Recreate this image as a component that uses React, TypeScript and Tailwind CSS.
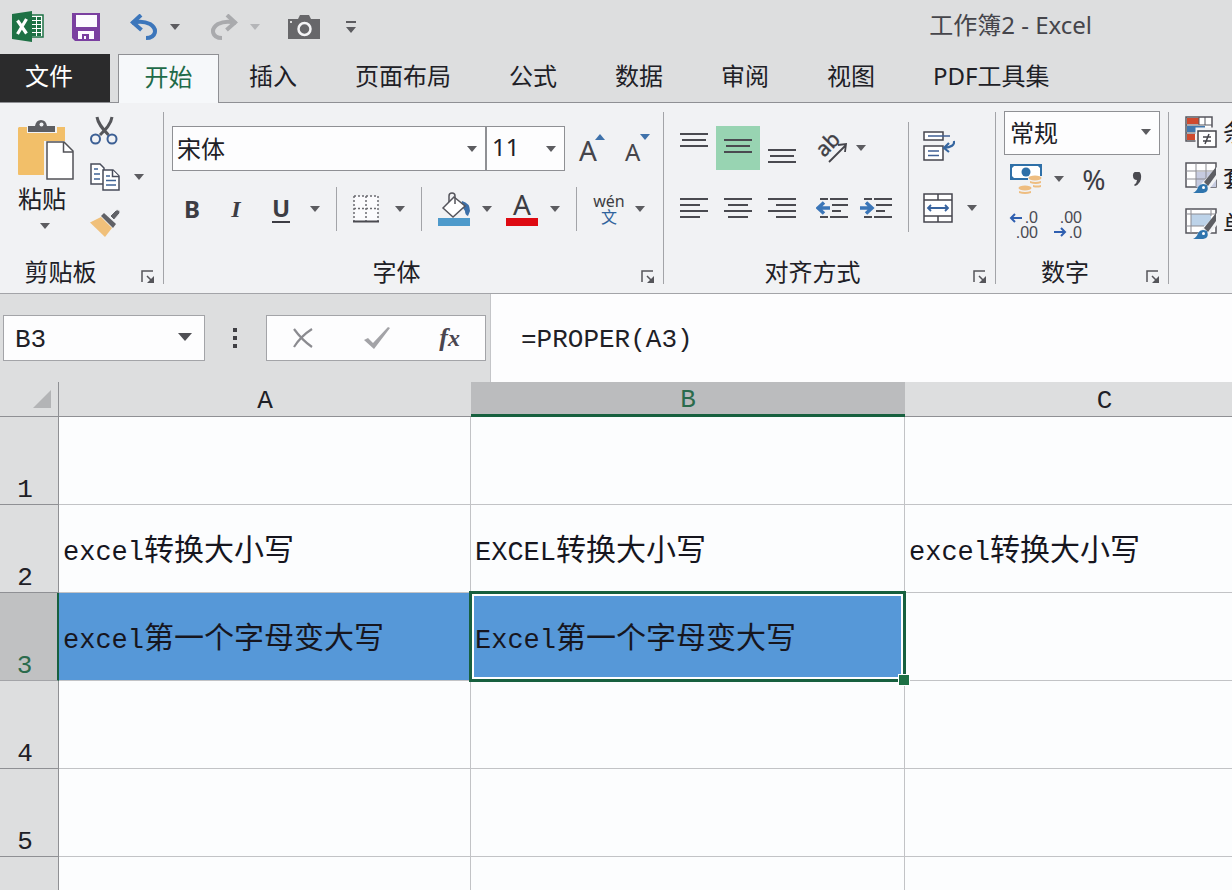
import type { ReactNode } from "react";

const COLUMNS = ["A", "B", "C"];

type Cell = { latin: string; han: string } | null;

const ROWS: { id: number; cells: Cell[]; filled?: boolean }[] = [
  { id: 1, cells: [null, null, null] },
  {
    id: 2,
    cells: [
      { latin: "excel", han: "转换大小写" },
      { latin: "EXCEL", han: "转换大小写" },
      { latin: "excel", han: "转换大小写" },
    ],
  },
  {
    id: 3,
    filled: true,
    cells: [{ latin: "excel", han: "第一个字母变大写" }, { latin: "Excel", han: "第一个字母变大写" }, null],
  },
  { id: 4, cells: [null, null, null] },
  { id: 5, cells: [null, null, null] },
];

const TABS = ["插入", "页面布局", "公式", "数据", "审阅", "视图", "PDF工具集"];

const Caret = ({ className = "text-[#5c5c60]" }: { className?: string }) => (
  <svg viewBox="0 0 10 6" className={`h-[6px] w-[10px] shrink-0 ${className}`} fill="currentColor" aria-hidden="true">
    <path d="M0 0h10L5 6z" />
  </svg>
);

const CaretButton = ({ label, className = "" }: { label: string; className?: string }) => (
  <button type="button" aria-label={label} className={`flex h-6 w-[10px] shrink-0 items-center ${className}`}>
    <Caret />
  </button>
);

const IconButton = ({ label, className = "", children }: { label: string; className?: string; children: ReactNode }) => (
  <button type="button" aria-label={label} title={label} className={`flex shrink-0 items-center justify-center ${className}`}>
    {children}
  </button>
);

const Separator = ({ className = "" }: { className?: string }) => (
  <div className={`w-px shrink-0 bg-[#a3a4a8] ${className}`} />
);

const Group = ({
  title,
  className = "",
  titleClassName = "",
  children,
}: {
  title: string;
  className?: string;
  titleClassName?: string;
  children: ReactNode;
}) => (
  <section className={`flex shrink-0 flex-col justify-between border-r border-[#a3a4a8] ${className}`}>
    {children}
    <div className="flex h-6 items-center">
      <span className={`flex-1 text-center ${titleClassName}`}>{title}</span>
      <button type="button" aria-label={`${title}设置`} className="flex h-full w-[34px] items-end justify-end pr-2">
        <svg viewBox="0 0 14 14" className="h-[14px] w-[14px]" fill="none" stroke="#55555a" strokeWidth="1.5">
          <path d="M1 12V1h11M6 6l6 6" />
          <path d="M13 6v7H6z" fill="#55555a" stroke="none" />
        </svg>
      </button>
    </div>
  </section>
);

const Lines = ({ rows }: { rows: [number, number][] }) => (
  <svg
    width="28"
    height={rows.length * 6 - 4}
    viewBox={`0 0 28 ${rows.length * 6 - 4}`}
    stroke="#4a4a50"
    strokeWidth="2"
    aria-hidden="true"
  >
    {rows.map(([from, to], i) => (
      <path key={i} d={`M${from} ${i * 6 + 1}H${to}`} />
    ))}
  </svg>
);

const ExcelLogo = () => (
  <svg width="32" height="32" viewBox="0 0 32 32" aria-hidden="true">
    <path d="M18 4h13v22H18z" fill="#fff" stroke="#1e7145" strokeWidth="1.5" />
    <path
      d="M20 6h4v3h-4zM20 10h4v3h-4zM20 14h4v3h-4zM20 18h4v3h-4zM20 22h4v3h-4zM25 6h4v3h-4zM25 10h4v3h-4zM25 14h4v3h-4zM25 18h4v3h-4zM25 22h4v3h-4z"
      fill="#1e7145"
    />
    <path d="M0 3 20 0v31L0 28z" fill="#1e7145" />
    <path d="m5.500 9.500 9 13M14.500 8 5.500 23" stroke="#fff" strokeWidth="3.200" fill="none" />
  </svg>
);

const SaveIcon = () => (
  <svg width="28" height="28" viewBox="0 0 28 28" aria-hidden="true">
    <path d="M0 0h28v28H3l-3-3z" fill="#7a3fa0" />
    <path d="M4 2h21v12H4zM6 18h16v8H6z" fill="#fcfaff" />
    <path d="M10 21h7v5h-3v-3h-2v3h-2z" fill="#7a3fa0" />
  </svg>
);

const UndoIcon = () => (
  <svg width="28" height="26" viewBox="0 0 28 26" fill="none" stroke="currentColor" aria-hidden="true">
    <path d="M2 9q10-3 18 1c8 5 6 14-4 14" strokeWidth="4" />
    <path d="M11 1 3 8.500l8.500 7.500" strokeWidth="4" />
  </svg>
);

const CameraIcon = () => (
  <svg width="32" height="24" viewBox="0 0 32 24" aria-hidden="true">
    <path d="M0 4h10l2-4h9l2 4h9v20H0z" fill="#67676a" />
    <circle cx="16.500" cy="14" r="6" fill="#67676a" stroke="#f4f4f6" strokeWidth="2.500" />
    <circle cx="3" cy="7" r="1" fill="#fff" />
  </svg>
);

const PasteIcon = () => (
  <svg width="56" height="60" viewBox="0 0 56 60" aria-hidden="true">
    <path d="M1 7h8v6h30V7h8v14H26v34H1q-1 0-1-1V8z" fill="#f2bf69" />
    <path d="M10 12V6h7q1-6 6-6t6 6h8v6z" fill="#5d5e62" />
    <circle cx="23.500" cy="4.500" r="2" fill="#f1f2f4" />
    <path d="M29 22h17l9 9v28H29z" fill="#fff" stroke="#515257" strokeWidth="1.500" />
    <path d="M45.500 22v10H55" fill="none" stroke="#515257" strokeWidth="1.500" />
  </svg>
);

const CutIcon = () => (
  <svg width="28" height="30" viewBox="0 0 28 30" fill="none" aria-hidden="true">
    <path d="M7 1c1 7 6 12 11.500 18M22 1c-1 7-6 12-12 18" stroke="#55565a" strokeWidth="3" />
    <circle cx="5.500" cy="23" r="4.500" stroke="#3c5f94" strokeWidth="2" />
    <circle cx="22" cy="23" r="4.500" stroke="#3c5f94" strokeWidth="2" />
  </svg>
);

const CopyIcon = () => (
  <svg width="30" height="28" viewBox="0 0 30 28" fill="#fff" stroke="#484c5a" strokeWidth="1.500" aria-hidden="true">
    <path d="M1 1h9l4 4v16H1z" />
    <path d="M4 6h4M4 11h6M4 16h6" stroke="#3f6395" />
    <path d="M13 7h10l6 6v14H13z" />
    <path d="M22.500 7v6.500H29" />
    <path d="M16 13h4M16 17.500h10M16 22h10" stroke="#3f6395" />
  </svg>
);

const BrushIcon = () => (
  <svg width="30" height="28" viewBox="0 0 30 28" aria-hidden="true">
    <path d="M0 13.500 11 8l11 11-7 9z" fill="#f0c07a" />
    <path d="m11 7 3-3 12 11-3 4z" fill="#606166" />
    <path d="m20 7 6-6q4-1 4 3l-6 7z" fill="#606166" stroke="#f1f2f4" />
  </svg>
);

const BordersIcon = () => (
  <svg width="26" height="28" viewBox="0 0 26 28" fill="none" stroke="#6b6b70" aria-hidden="true">
    <path d="M1 1h24v25H1z" fill="#fbfbfd" stroke="none" />
    <path d="M1 1h24M1 13.500h24M1 1v25M13 1v25M25 1v25" strokeWidth="1.500" strokeDasharray="2 2" />
    <path d="M0 26.500h26" stroke="#4b4b50" strokeWidth="2" />
  </svg>
);

const FillIcon = () => (
  <svg width="32" height="34" viewBox="0 0 32 34" aria-hidden="true">
    <path d="M0 26h32v8H0z" fill="#4e9acb" />
    <path d="M24 9q8 2 8 10l-2 5q-3-1-3-5l-4-6z" fill="#3c6fa8" />
    <path d="M5 16 16 5l11 9-12 11z" fill="#fff" stroke="#55555c" strokeWidth="1.500" />
    <path d="M11 10V4q0-3 3-3t3 3v8" fill="none" stroke="#55555c" strokeWidth="1.500" />
  </svg>
);

const OrientationIcon = () => (
  <svg width="32" height="30" viewBox="0 0 32 30" className="overflow-visible" aria-hidden="true">
    <text x="8" y="25" transform="rotate(-45 8 25)" fontSize="21" fill="#3f3f45" stroke="#3f3f45" strokeWidth="0.400">
      ab
    </text>
    <path d="M13 29 30 12M22 12l8-1-1 8" fill="none" stroke="#45454b" strokeWidth="1.800" />
  </svg>
);

const IndentIcon = ({ increase = false }: { increase?: boolean }) => (
  <svg width="32" height="22" viewBox="0 0 32 22" fill="none" aria-hidden="true">
    <path d="M4 2h8M14 2h18M16 8h16M16 14h9M4 20h8M14 20h18" stroke="#4a4a50" strokeWidth="2" />
    {increase ? (
      <path d="M0 11h11M6 5.500l6 5.500-6 5.500" stroke="#3b76b8" strokeWidth="3.500" />
    ) : (
      <path d="M14 11H3M8 5.500 2 11l6 5.500" stroke="#3b76b8" strokeWidth="3.500" />
    )}
  </svg>
);

const WrapIcon = () => (
  <svg width="32" height="30" viewBox="0 0 32 30" fill="none" stroke="#45464e" strokeWidth="1.500" aria-hidden="true">
    <path d="M1 1h19v8H1zM1 15h19v14H1z" fill="#fff" />
    <path d="M5 5h22M5 20h11M5 24.500h11" stroke="#3f5f94" />
    <path d="M31 10q1 6-10 7M26 12l-5 5 5 4" stroke="#35659f" strokeWidth="2.200" />
  </svg>
);

const MergeIcon = () => (
  <svg width="30" height="30" viewBox="0 0 30 30" fill="none" stroke="#45464e" strokeWidth="1.500" aria-hidden="true">
    <path d="M1 1h28v28H1z" fill="#fff" />
    <path d="M1 7h28M1 23h28M15 1v6M15 23v6" />
    <path d="M5 15h20M8 12l-3 3 3 3M22 12l3 3-3 3" stroke="#38639e" strokeWidth="1.800" />
  </svg>
);

const CurrencyIcon = () => (
  <svg width="32" height="32" viewBox="0 0 32 32" aria-hidden="true">
    <path d="M1 2h30v14H1z" fill="#fff" stroke="#2f70a8" strokeWidth="2" />
    <path d="M0 1h6L0 7zM32 1h-6l6 6zM0 17h6l-6-6z" fill="#2f70a8" />
    <circle cx="16" cy="9" r="4.500" fill="#2f70a8" />
    <path d="M8 21h10v-8h14v16H20v3H8z" fill="#f1f2f4" />
    <g fill="#eebd80">
      <ellipse cx="25" cy="15" rx="6.500" ry="2.500" />
      <ellipse cx="15" cy="25" rx="6.500" ry="2.500" />
      <path d="M20 18q5 2 11 0v2q-5 2-11 0zM23 22q4 1 8 0v2q-4 1-8 0zM9 28q6 2 12 0v2q-6 2-12 0z" />
    </g>
  </svg>
);

const DecimalIcon = ({ increase = false }: { increase?: boolean }) => (
  <svg
    width="30"
    height="28"
    viewBox="0 0 30 28"
    className="overflow-visible font-['Liberation_Sans',sans-serif]"
    fontSize="16"
    fill="#4a4a52"
    aria-hidden="true"
  >
    <text x="29" y="12" textAnchor="end">
      {increase ? ".0" : ".00"}
    </text>
    <text x="29" y="27" textAnchor="end">
      {increase ? ".00" : ".0"}
    </text>
    <path
      d={increase ? "M13 7H2M6 3 2 7l4 4" : "M1 21h11M8 17l4 4-4 4"}
      fill="none"
      stroke="#2f5fb0"
      strokeWidth="2"
    />
  </svg>
);

const ConditionalIcon = () => (
  <svg width="32" height="32" viewBox="0 0 32 32" className="shrink-0" aria-hidden="true">
    <path d="M1 1h26v24H1z" fill="#fff" stroke="#55555c" strokeWidth="1.500" />
    <path d="M2 2h12v6H2z" fill="#cf4a2e" />
    <path d="M2 10h18v6H2z" fill="#4178ae" />
    <path d="M2 18h8v6H2z" fill="#cf4a2e" />
    <path d="M1 9h26M1 17h12M14 1v8M20 1v8" stroke="#55555c" />
    <path d="M13 14h18v17H13z" fill="#fff" stroke="#f1f2f4" strokeWidth="5" />
    <path d="M13 15h18v16H13zM18 21h8M18 25h8M24 18l-4 10" fill="#fff" stroke="#45454b" strokeWidth="1.500" />
  </svg>
);

const StyleBrushIcon = ({ cell = false }: { cell?: boolean }) => (
  <svg width="32" height="32" viewBox="0 0 32 32" className="shrink-0" fill="none" aria-hidden="true">
    <path d="M1 1h30v24H1z" fill="#fff" stroke="#55555c" strokeWidth="1.500" />
    {cell ? (
      <>
        <path d="M6 6h20v12H6z" fill="#bdd3e9" />
        <path d="M1 6h30M1 18h18M6 1v24M26 1v7" stroke="#8b8b92" />
      </>
    ) : (
      <>
        <path d="M11 10h20v15H11z" fill="#c6cbe0" />
        <path d="M1 9h30M1 17h30M11 1v24M21 1v24" stroke="#8b8b92" />
      </>
    )}
    <path d="M32 5v12L22 30H8l8-8z" fill="#f1f2f4" />
    <path d="M31 5v8l-8 11-4-4z" fill="#5d5e63" />
    <path d="M8 31q4-2 5-6 3-5 9-2 3 8-6 8z" fill="#2f75ae" />
    <circle cx="18.500" cy="25.500" r="1.500" fill="#fff" />
  </svg>
);

const QuickAccess = () => (
  <header className="flex h-[54px] shrink-0 items-center justify-between pl-3 pr-[140px]">
    <div className="flex items-center">
      <ExcelLogo />
      <IconButton label="保存" className="ml-7">
        <SaveIcon />
      </IconButton>
      <IconButton label="撤消" className="ml-[30px] text-[#3c76bb]">
        <UndoIcon />
      </IconButton>
      <CaretButton label="撤消列表" className="ml-3" />
      <IconButton label="恢复" className="ml-[30px] -scale-x-100 text-[#a9aaad]">
        <UndoIcon />
      </IconButton>
      <span className="ml-3">
        <Caret className="text-[#b4b5b8]" />
      </span>
      <IconButton label="照相机" className="ml-7">
        <CameraIcon />
      </IconButton>
      <IconButton label="自定义快速访问工具栏" className="ml-[26px]">
        <svg width="10" height="12" viewBox="0 0 10 12" fill="#5c5c60">
          <path d="M0 0h10v2H0zM0 6h10l-5 6z" />
        </svg>
      </IconButton>
    </div>
    <h1 className="whitespace-nowrap pb-1 text-[#45454b]">工作簿2 - Excel</h1>
  </header>
);

const TabBar = () => (
  <nav className="flex h-[49px] shrink-0 items-stretch border-b border-[#8f9094]">
    <button type="button" className="w-[110px] bg-[#2b2b2c] pb-1 pr-3 text-white">
      文件
    </button>
    <button type="button" className="-mb-px ml-2 w-[101px] border border-b-0 border-[#8f9094] bg-[#f6f8fa] pb-1 text-[#1f6b49]">
      开始
    </button>
    <div className="ml-[30px] flex gap-[58px] pb-1">
      {TABS.map((tab) => (
        <button key={tab} type="button" className="whitespace-nowrap">
          {tab}
        </button>
      ))}
    </div>
  </nav>
);

const ClipboardGroup = () => (
  <Group title="剪贴板" titleClassName="pr-2" className="w-[164px]">
    <div className="flex pl-[18px] pt-2">
      <button type="button" className="flex w-14 flex-col items-start">
        <PasteIcon />
        <span className="mt-[7px]">粘贴</span>
        <span className="ml-[22px] mt-3">
          <Caret />
        </span>
      </button>
      <div className="-mt-3 ml-4 flex flex-col items-start">
        <IconButton label="剪切" className="h-[46px]">
          <CutIcon />
        </IconButton>
        <div className="flex h-[46px] items-center">
          <IconButton label="复制">
            <CopyIcon />
          </IconButton>
          <CaretButton label="复制选项" className="ml-[14px]" />
        </div>
        <IconButton label="格式刷" className="h-[46px]">
          <BrushIcon />
        </IconButton>
      </div>
    </div>
  </Group>
);

const FontGroup = () => (
  <Group title="字体" className="w-[500px]">
    <div className="pl-2 pt-[14px]">
      <div className="flex h-[45px]">
        <div className="relative w-[314px]">
          <select aria-label="字体" className="h-full w-full appearance-none border border-[#8f9094] bg-[#fdfdfe] pl-1">
            <option>宋体</option>
          </select>
          <span className="pointer-events-none absolute right-[9px] top-5">
            <Caret />
          </span>
        </div>
        <div className="relative w-[79px]">
          <select aria-label="字号" className="h-full w-full appearance-none border border-[#8f9094] bg-[#fdfdfe] pb-1 pl-[5px]">
            <option>11</option>
          </select>
          <span className="pointer-events-none absolute right-[9px] top-5">
            <Caret />
          </span>
        </div>
        <button type="button" aria-label="增大字号" className="ml-[14px] flex items-start pt-2 text-[28px] text-[#45454b]">
          <span className="leading-8">A</span>
          <Caret className="-ml-0.5 rotate-180 text-[#3f72ab]" />
        </button>
        <button type="button" aria-label="减小字号" className="ml-5 flex items-start pt-2 text-[#45454b]">
          <span className="leading-9">A</span>
          <Caret className="text-[#3f72ab]" />
        </button>
      </div>
      <div className="mt-4 flex h-11 items-center text-[#3d3d43]">
        <button type="button" className="ml-3 w-4 font-bold">
          B
        </button>
        <button type="button" className="ml-7 w-4 font-['Liberation_Serif',serif] font-bold italic">
          I
        </button>
        <button type="button" className="ml-7 h-7 w-[18px] border-b-2 border-[#3d3d43] font-bold leading-6">
          U
        </button>
        <CaretButton label="下划线选项" className="ml-5" />
        <Separator className="ml-4 h-11" />
        <IconButton label="边框" className="ml-4">
          <BordersIcon />
        </IconButton>
        <CaretButton label="边框选项" className="ml-4" />
        <Separator className="ml-4 h-11" />
        <IconButton label="填充颜色" className="ml-4">
          <FillIcon />
        </IconButton>
        <CaretButton label="填充颜色选项" className="ml-3" />
        <button type="button" aria-label="字体颜色" className="ml-[14px] flex h-[34px] w-8 flex-col items-center border-b-8 border-[#de0a12] text-[28px] leading-6">
          A
        </button>
        <CaretButton label="字体颜色选项" className="ml-3" />
        <Separator className="ml-4 h-11" />
        <button type="button" className="ml-4 flex w-8 flex-col items-center">
          <span className="text-base leading-4">wén</span>
          <span className="text-base leading-4 text-[#30639c]">文</span>
        </button>
        <CaretButton label="拼音选项" className="ml-[10px]" />
      </div>
    </div>
  </Group>
);

const AlignmentGroup = () => (
  <Group title="对齐方式" className="w-[332px]">
    <div className="flex pl-2 pt-[14px]">
      <div>
        <div className="flex h-11">
          <IconButton label="顶端对齐" className="h-7 w-11">
            <Lines rows={[[0, 28], [2, 26], [0, 28]]} />
          </IconButton>
          <IconButton label="垂直居中" className="h-11 w-11 bg-[#98d4b2] pb-1">
            <Lines rows={[[0, 28], [2, 26], [0, 28]]} />
          </IconButton>
          <IconButton label="底端对齐" className="h-11 w-11 pt-4">
            <Lines rows={[[0, 28], [2, 26], [0, 28]]} />
          </IconButton>
          <IconButton label="方向" className="ml-3">
            <OrientationIcon />
          </IconButton>
          <CaretButton label="方向选项" className="ml-2 mt-[10px]" />
        </div>
        <div className="mt-4 flex h-11 items-center">
          <IconButton label="左对齐" className="h-11 w-11">
            <Lines rows={[[0, 28], [0, 20], [0, 28], [0, 20]]} />
          </IconButton>
          <IconButton label="居中" className="h-11 w-11">
            <Lines rows={[[0, 28], [4, 24], [0, 28], [4, 24]]} />
          </IconButton>
          <IconButton label="右对齐" className="h-11 w-11">
            <Lines rows={[[0, 28], [8, 28], [0, 28], [8, 28]]} />
          </IconButton>
          <IconButton label="减少缩进量" className="ml-3">
            <IndentIcon />
          </IconButton>
          <IconButton label="增加缩进量" className="ml-3">
            <IndentIcon increase />
          </IconButton>
        </div>
      </div>
      <Separator className="-mt-1 ml-4 h-[110px]" />
      <div className="ml-[14px] flex flex-col">
        <IconButton label="自动换行" className="h-10 w-8">
          <WrapIcon />
        </IconButton>
        <div className="mt-5 flex h-11 items-center">
          <IconButton label="合并后居中">
            <MergeIcon />
          </IconButton>
          <CaretButton label="合并选项" className="ml-[14px]" />
        </div>
      </div>
    </div>
  </Group>
);

const NumberGroup = () => (
  <Group title="数字" className="w-[173px]">
    <div className="-mt-px px-2">
      <div className="relative h-11">
        <select aria-label="数字格式" className="h-full w-full appearance-none border border-[#8f9094] bg-[#fdfdfe] pl-[5px]">
          <option>常规</option>
        </select>
        <span className="pointer-events-none absolute right-[9px] top-[18px]">
          <Caret />
        </span>
      </div>
      <div className="mt-2 flex h-8 items-center pl-[6px]">
        <IconButton label="会计数字格式">
          <CurrencyIcon />
        </IconButton>
        <CaretButton label="会计数字格式选项" className="ml-3" />
        <button type="button" className="ml-4 w-7 text-[28px] text-[#3d3d43]">
          %
        </button>
        <button type="button" aria-label="千位分隔样式" className="ml-6">
          <svg width="10" height="14" viewBox="0 0 10 14" fill="#4a4a50">
            <path d="M1 4a4 4 0 0 1 8-1q1 8-6 11l-1-1q3-2 3-5Q1 8 1 4z" />
          </svg>
        </button>
      </div>
      <div className="mt-4 flex gap-[14px] pl-[5px]">
        <IconButton label="增加小数位数">
          <DecimalIcon increase />
        </IconButton>
        <IconButton label="减少小数位数">
          <DecimalIcon />
        </IconButton>
      </div>
    </div>
  </Group>
);

const StylesGroup = () => (
  <section className="flex flex-1 flex-col gap-[14px] overflow-hidden pl-4 pt-1">
    <button type="button" className="flex h-8 items-center gap-[6px]">
      <ConditionalIcon />
      <span className="shrink-0">条</span>
    </button>
    <button type="button" className="flex h-8 items-center gap-[6px]">
      <StyleBrushIcon />
      <span className="shrink-0">套</span>
    </button>
    <button type="button" className="flex h-8 items-center gap-[6px]">
      <StyleBrushIcon cell />
      <span className="shrink-0">单</span>
    </button>
  </section>
);

const FormulaBar = () => (
  <div className="flex h-[88px] shrink-0">
    <div className="flex items-center pl-[3px]">
      <div className="relative h-[46px] w-[202px]">
        <input
          aria-label="名称框"
          defaultValue="B3"
          className="h-full w-full border border-[#a3a4a8] bg-[#fdfdfe] pl-[11px] pt-1 font-['Liberation_Mono',monospace] text-[26px]"
        />
        <svg width="14" height="8" viewBox="0 0 14 8" className="absolute right-[13px] top-[18px]" fill="#4f4f54">
          <path d="M0 0h14L7 8z" />
        </svg>
      </div>
      <div className="ml-7 mr-[29px] flex w-1 flex-col gap-1">
        <span className="h-1 w-1 bg-[#3f3f44]" />
        <span className="h-1 w-1 bg-[#3f3f44]" />
        <span className="h-1 w-1 bg-[#3f3f44]" />
      </div>
      <div className="flex h-[46px] w-[220px] items-center justify-between border border-[#a3a4a8] bg-[#fdfdfe] px-[25px]">
        <IconButton label="取消">
          <svg width="22" height="20" viewBox="0 0 22 20" fill="none" stroke="#8b8b90" strokeWidth="2.200">
            <path d="M2 1q8 11 18 18M20 1Q9 8 2 19" />
          </svg>
        </IconButton>
        <IconButton label="输入">
          <svg width="26" height="22" viewBox="0 0 26 22" fill="#a3a3a7">
            <path d="m0 13 4-2 5 5L24 0l2 1-16 21z" />
          </svg>
        </IconButton>
        <IconButton label="插入函数" className="items-baseline font-['Liberation_Serif',serif] font-bold italic text-[#4a4650]">
          <span className="text-[26px] leading-7">f</span>
          <span className="text-2xl leading-7">x</span>
        </IconButton>
      </div>
    </div>
    <input
      aria-label="编辑栏"
      defaultValue="=PROPER(A3)"
      className="ml-1 min-w-0 flex-1 border-l border-[#c4c5c8] bg-[#fdfdfe] pl-[30px] pt-1 font-['Liberation_Mono',monospace] text-[26px]"
    />
  </div>
);

const Sheet = () => (
  <div className="flex-1 overflow-hidden bg-[#fcfdfe]">
    <table className="w-full table-fixed border-separate border-spacing-0 text-left">
      <colgroup>
        <col className="w-[59px]" />
        <col className="w-[412px]" />
        <col className="w-[434px]" />
        <col />
      </colgroup>
      <thead>
        <tr className="h-[35px] bg-[#dddedf] font-['Liberation_Mono',monospace] text-[26px] leading-7">
          <th className="border-b border-r border-[#8f9094] p-0">
            <svg width="18" height="18" viewBox="0 0 18 18" className="ml-auto mr-[7px]" fill="#b3b4b6">
              <path d="M18 0v18H0z" />
            </svg>
          </th>
          {COLUMNS.map((column) => (
            <th
              key={column}
              scope="col"
              className={
                column === "B"
                  ? "border-b-[3px] border-[#17603f] bg-[#bbbcbe] p-0 pt-1 text-center font-normal text-[#2b6b4c]"
                  : column === "C"
                    ? "border-b border-[#8f9094] p-0 pl-[72px] pt-1 text-center font-normal"
                    : "border-b border-[#8f9094] p-0 pt-1 text-center font-normal"
              }
            >
              {column}
            </th>
          ))}
        </tr>
      </thead>
      <tbody>
        {ROWS.map((row) => (
          <tr key={row.id} className="h-[88px]">
            <th
              scope="row"
              className={`border-b p-0 pr-2 text-center align-bottom font-['Liberation_Mono',monospace] text-[26px] font-normal leading-7 ${
                row.filled
                  ? "border-r-2 border-b-[#a3a4a8] border-r-[#17603f] bg-[#c0c1c2] text-[#2b6b4c]"
                  : "border-r border-[#8f9094] bg-[#dddedf]"
              }`}
            >
              {row.id}
            </th>
            {row.cells.map((cell, i) => (
              <td
                key={i}
                className={`relative border-b border-[#c2c3c6] p-0 pl-1 pt-1 align-middle text-[30px] leading-9 ${
                  i < 2 ? "border-r" : ""
                } ${row.filled && cell ? "bg-[#5698d8]" : ""}`}
              >
                {row.filled && i === 1 && (
                  <div className="absolute -bottom-0.5 -left-0.5 -right-0.5 -top-0.5 z-10 border-[3px] border-[#17603f]">
                    <div className="h-full w-full border-2 border-white" />
                    <div className="absolute -bottom-[7px] -right-[7px] h-3 w-3 border border-white bg-[#1e7145]" />
                  </div>
                )}
                {cell && (
                  <span className="relative z-20 whitespace-nowrap text-[#16161f]">
                    <span className="font-['Liberation_Mono',monospace] text-[27px]">{cell.latin}</span>
                    {cell.han}
                  </span>
                )}
              </td>
            ))}
          </tr>
        ))}
        <tr className="h-[88px]">
          <th className="border-r border-[#8f9094] bg-[#dddedf]" />
          <td className="border-r border-[#c2c3c6]" />
          <td className="border-r border-[#c2c3c6]" />
          <td />
        </tr>
      </tbody>
    </table>
  </div>
);

export default function App() {
  return (
    <div className="flex h-screen flex-col overflow-hidden bg-[#dddedf] font-['Noto_Sans','Noto_Sans_CJK_SC',sans-serif] text-2xl leading-6 text-[#202026]">
      <QuickAccess />
      <TabBar />
      <div className="flex h-[191px] shrink-0 overflow-hidden border-b border-[#a3a4a8] bg-[#f1f2f4] py-[9px]">
        <ClipboardGroup />
        <FontGroup />
        <AlignmentGroup />
        <NumberGroup />
        <StylesGroup />
      </div>
      <FormulaBar />
      <Sheet />
    </div>
  );
}
